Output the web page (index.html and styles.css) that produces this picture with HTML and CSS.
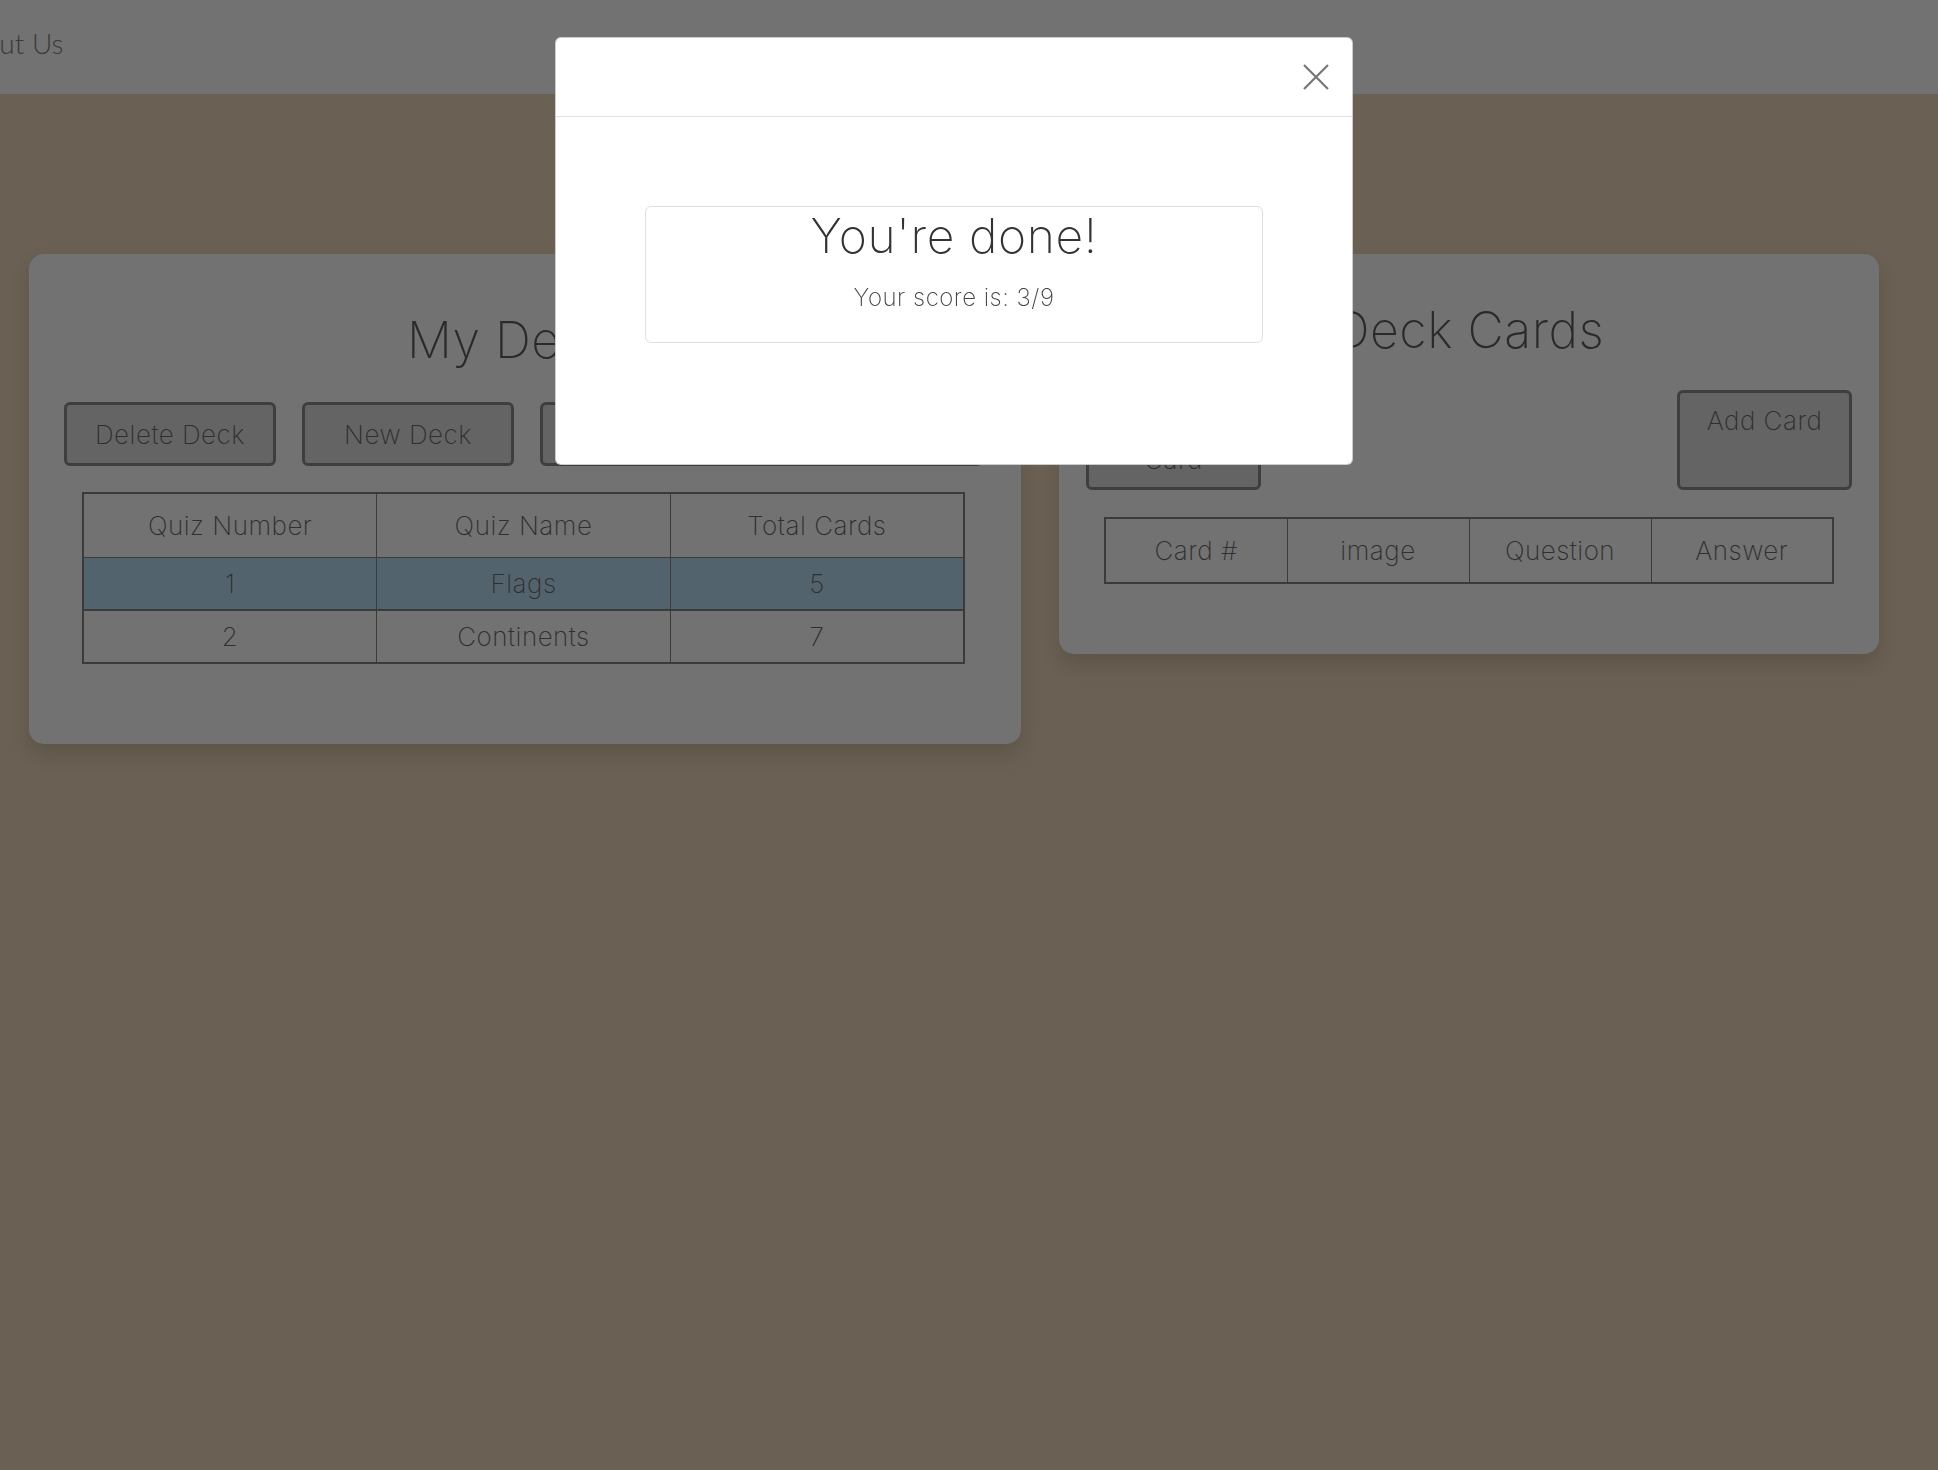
FILE: index.html
```html
<!DOCTYPE html>
<html lang="en">
<head>
<meta charset="utf-8">
<title>Flash Cards</title>
<link rel="stylesheet" href="styles.css">
</head>
<body>
<nav class="navbar">
  <a class="nav-link">About Us</a>
</nav>
<main class="decks">
  <section class="panel panel-decks">
    <h2 class="panel-title">My Decks</h2>
    <div class="btn-row">
      <div class="btn btn-deck">Delete Deck</div>
      <div class="btn btn-deck">New Deck</div>
      <div class="btn btn-grow">Start Quiz</div>
    </div>
    <table class="grid grid-decks">
      <thead>
        <tr><th>Quiz Number</th><th>Quiz Name</th><th>Total Cards</th></tr>
      </thead>
      <tbody>
        <tr class="selected"><td>1</td><td>Flags</td><td>5</td></tr>
        <tr><td>2</td><td>Continents</td><td>7</td></tr>
      </tbody>
    </table>
  </section>
  <section class="panel panel-cards">
    <h2 class="panel-title">Deck Cards</h2>
    <div class="card-actions">
      <div class="btn btn-tall">Delete Card</div>
      <div class="btn btn-tall">Add Card</div>
    </div>
    <table class="grid grid-cards">
      <thead>
        <tr><th>Card #</th><th>image</th><th>Question</th><th>Answer</th></tr>
      </thead>
    </table>
  </section>
</main>
<div class="backdrop"></div>
<div class="modal">
  <div class="modal-header">
    <button class="close" aria-label="Close">
      <svg width="26" height="26" viewBox="0 0 26 26"><path d="M1 1 L25 25 M25 1 L1 25" stroke="#777" stroke-width="2.2" fill="none"/></svg>
    </button>
  </div>
  <div class="modal-body">
    <div class="result">
      <h1 class="result-title">You're done!</h1>
      <p class="result-score">Your score is: 3/9</p>
    </div>
  </div>
</div>
</body>
</html>
```
FILE: styles.css
```css
html, body {
  margin: 0;
  padding: 0;
}
body {
  background: #d4c0a6;
  font-family: Inter, "Liberation Sans", sans-serif;
  font-weight: 200;
  color: #666;
  min-height: 100vh;
  overflow: hidden;
}

.navbar {
  height: 94px;
  background: #e4e4e4;
  display: flex;
  align-items: center;
  overflow: hidden;
}
.nav-link {
  margin-left: -50px;
  margin-top: -9px;
  font-family: Lato, "Open Sans", sans-serif;
  font-weight: 300;
  font-size: 28px;
  color: #777;
}

.decks {
  display: flex;
  align-items: flex-start;
  gap: 38px;
  padding: 160px 0 0 29px;
}
.panel {
  background: #e4e4e4;
  border-radius: 15px;
  box-shadow: 0 10px 20px rgba(0, 0, 0, 0.12);
  box-sizing: border-box;
}
.panel-decks {
  width: 992px;
  padding: 56px 38px 80px 35px;
}
.panel-cards {
  width: 820px;
  padding: 46px 27px 70px;
}
.panel-title {
  margin: 0;
  font-size: 50px;
  line-height: 60px;
  font-weight: 200;
  text-align: center;
  color: #555;
  letter-spacing: 0.5px;
}

.btn {
  box-sizing: border-box;
  border: 3px solid #7c7c7c;
  border-radius: 6px;
  background: #c8c8c8;
  font-size: 26px;
  color: #5e5e5e;
  letter-spacing: 0.5px;
  display: flex;
  justify-content: center;
  text-align: center;
}
.btn-row {
  margin-top: 32px;
  display: flex;
  gap: 26px;
}
.btn-row .btn {
  height: 64px;
  align-items: center;
}
.btn-deck {
  width: 212px;
}
.btn-grow {
  flex: 1;
}
.card-actions {
  margin-top: 30px;
  display: flex;
  justify-content: space-between;
}
.btn-tall {
  width: 175px;
  height: 100px;
  align-items: flex-start;
  padding: 8px 20px 0;
  line-height: 39px;
}

.grid {
  border-collapse: collapse;
  margin: 0 auto;
  border: 2px solid #777;
  font-size: 26px;
  color: #5e5e5e;
  letter-spacing: 0.5px;
}
.grid th,
.grid td {
  border: 1px solid #777;
  font-weight: 200;
  text-align: center;
  padding: 0;
}
.grid-decks {
  margin-top: 26px;
  width: 883px;
}
.grid-decks th {
  height: 63px;
  width: 33.33%;
}
.grid-decks td {
  height: 51px;
}
.grid-decks .selected td {
  background: #a5c7dd;
  border-bottom: 2px solid #777;
}
.grid-cards {
  margin-top: 27px;
  width: 730px;
}
.grid-cards th {
  height: 63px;
  width: 25%;
}

.backdrop {
  position: fixed;
  inset: 0;
  background: rgba(0, 0, 0, 0.5);
}
.modal {
  position: fixed;
  top: 37px;
  left: 555px;
  width: 798px;
  box-sizing: border-box;
  background: #fff;
  border: 1px solid rgba(0, 0, 0, 0.2);
  border-radius: 6px;
}
.modal-header {
  height: 79px;
  box-sizing: border-box;
  border-bottom: 1px solid #dee2e6;
  display: flex;
  justify-content: flex-end;
  align-items: center;
  padding-right: 23px;
}
.close {
  background: none;
  border: 0;
  padding: 0;
  width: 26px;
  height: 26px;
  display: block;
  cursor: pointer;
}
.close svg {
  display: block;
}
.modal-body {
  padding: 89px 89px 121px;
}
.result {
  border: 1px solid #dfdfdf;
  border-radius: 6px;
  padding: 0 0 30px;
  text-align: center;
}
.result-title {
  margin: 0;
  font-size: 48px;
  line-height: 58px;
  font-weight: 200;
  color: #333;
  letter-spacing: 0.6px;
}
.result-score {
  margin: 18px 0 0;
  font-size: 24px;
  line-height: 29px;
  color: #444;
  letter-spacing: 0.5px;
}
```
